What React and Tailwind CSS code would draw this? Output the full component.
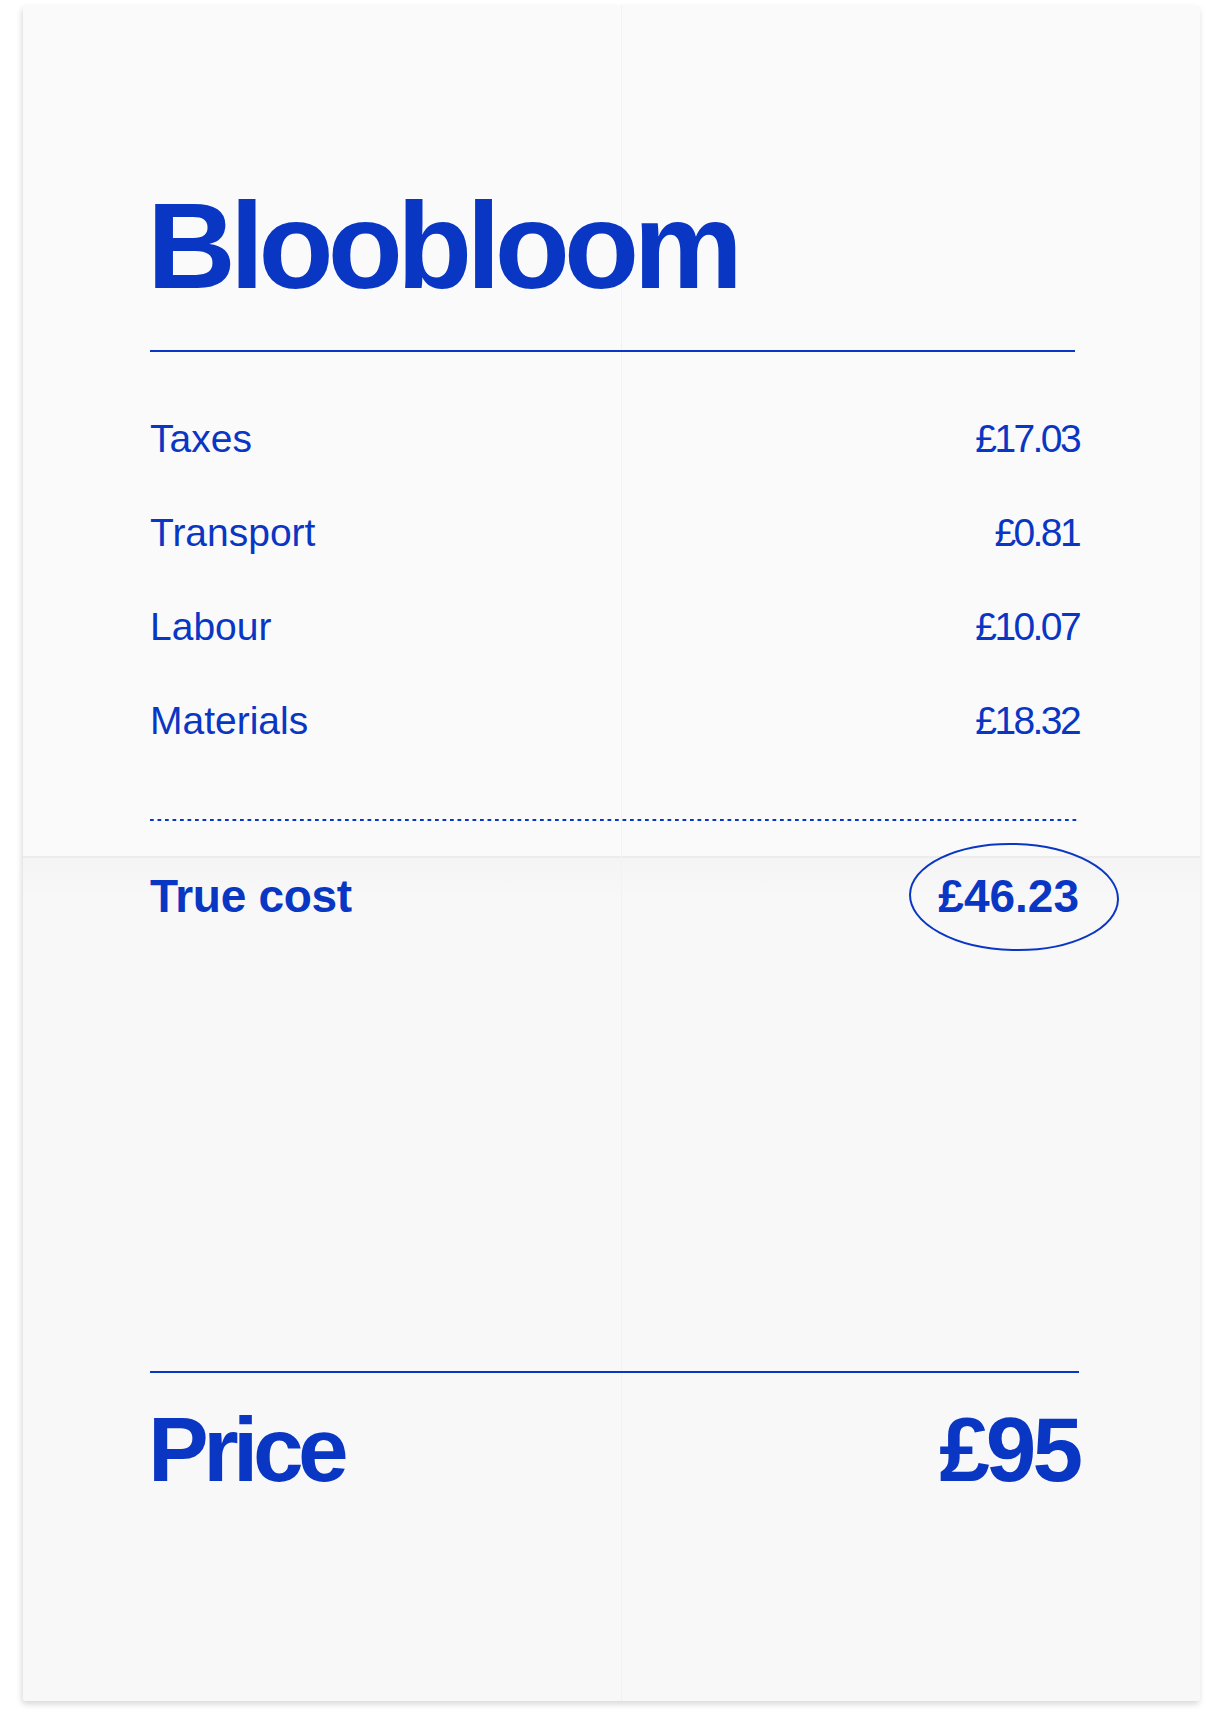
import React from 'react';

// 비용 항목
const costItems = [
  { label: 'Taxes', value: '£17.03' },
  { label: 'Transport', value: '£0.81' },
  { label: 'Labour', value: '£10.07' },
  { label: 'Materials', value: '£18.32' },
];

const font = { fontFamily: '"Liberation Sans", Arial, sans-serif' };

const App = () => {
  return (
      <div className="w-[1206px] h-[1728px] bg-white pt-[6px] pl-[23px]" style={font}>
        <div className="relative w-[1177px] h-[1695px] rounded-[2px] bg-[#f8f8f8] shadow-[-1px_3px_6px_rgba(0,0,0,0.16)] pt-[178px] pl-[127px] pr-[121px] text-[#0a36c4] overflow-hidden">
          {/* 종이 접힌 자국 */}
          <div className="absolute left-0 right-0 top-0 h-[850px] bg-[#fafafa]"></div>
          <div className="absolute left-0 right-0 top-[850px] h-[2px] bg-[#ececec]"></div>
          <div className="absolute left-0 right-0 top-[852px] h-[40px] bg-gradient-to-b from-[#f4f4f4] to-[#f8f8f8]"></div>
          <div className="absolute top-0 bottom-0 left-[598px] w-px bg-[#f2f2f2]"></div>

          <div className="relative">
            {/* 로고 */}
            <h1 className="text-[123px] font-bold leading-none tracking-[-5.8px] -ml-[3px]">
              Bloobloom
            </h1>
            <div className="mt-[43px] h-[2px] w-[925px] bg-[#0a36c4]"></div>

            {/* 항목 */}
            <div className="mt-[67px] flex flex-col gap-[55px]">
              {costItems.map((item) => (
                  <div key={item.label} className="flex justify-between text-[39px] leading-none">
                    <span>{item.label}</span>
                    <span className="tracking-[-2.6px]">{item.value}</span>
                  </div>
              ))}
            </div>

            <div className="mt-[79px] h-[2px] w-full bg-[linear-gradient(to_right,#0a36c4_50%,transparent_50%)] bg-[length:7.5px_2px] bg-repeat-x"></div>

            {/* 실제 비용 */}
            <div className="mt-[52px] flex justify-between text-[46px] font-bold leading-none">
              <span className="tracking-[-0.3px]">True cost</span>
              <span className="relative">
                £46.23
                <svg className="absolute left-[-30px] top-[-31px]" width="212" height="110" viewBox="0 0 212 110">
                  <ellipse cx="106" cy="55" rx="104" ry="53" fill="none" stroke="#0a36c4" strokeWidth="2" transform="rotate(1.5 106 55)" />
                </svg>
              </span>
            </div>

            <div className="mt-[452px] h-[2px] w-full bg-[#0a36c4]"></div>

            {/* 가격 */}
            <div className="mt-[31px] flex justify-between text-[91px] font-bold leading-none">
              <span className="tracking-[-5.5px] -ml-[2px]">Price</span>
              <span className="tracking-[-4px]">£95</span>
            </div>
          </div>
        </div>
      </div>
  );
};

export default App;
